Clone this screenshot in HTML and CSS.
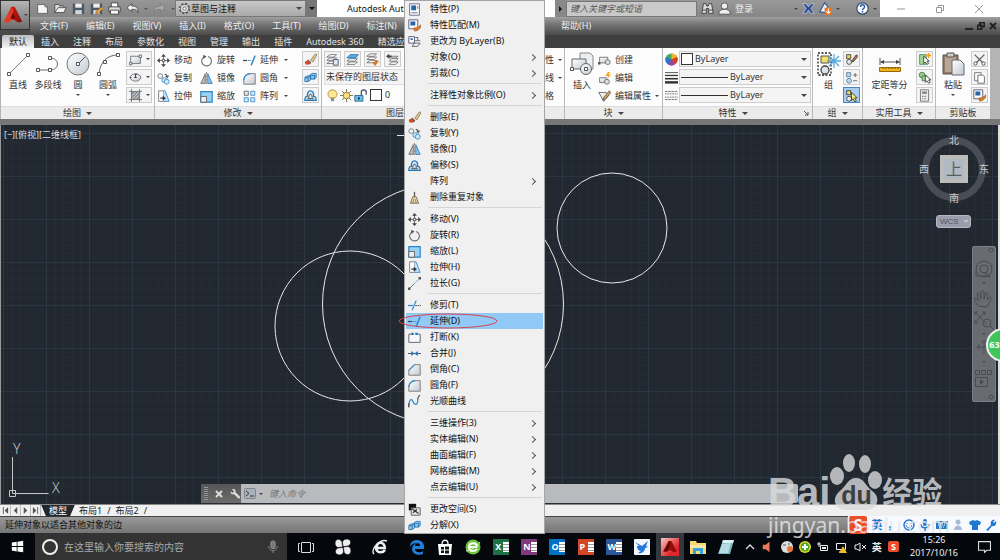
FILE: index.html
```html
<!DOCTYPE html>
<html lang="zh-CN">
<head>
    <meta charset="UTF-8">
    <meta name="viewport" content="width=device-width, initial-scale=1.0">
    <title>Autodesk AutoCAD</title>
    <link rel="stylesheet" href="styles.css">
</head>
<body>
<!-- Icon sprite -->
<svg class="sprite" aria-hidden="true">
    <defs>
        <linearGradient id="shade" x1="0" y1="0" x2="1" y2="1"><stop offset="0" stop-color="#fff"/><stop offset="1" stop-color="#c3cad3"/></linearGradient>
        <linearGradient id="red" x1="0" y1="0" x2="1" y2="0"><stop offset="0" stop-color="#f0553c"/><stop offset=".5" stop-color="#c31a10"/><stop offset="1" stop-color="#7d0b06"/></linearGradient>
    </defs>
    <symbol id="i-acad" viewBox="0 0 24 24"><path d="M10 2h4l9 18-5 1-6-4-6 4-5-1z" fill="url(#red)"/><path d="M12 2v15l-6 4-5-1z" fill="#e23a26"/><path d="M12 9l3 7-3 1-3-1z" fill="#6b0804"/></symbol>
    <symbol id="i-acadtask" viewBox="0 0 24 24"><path d="M10 4h4l7 14-4 1-5-3-5 3-4-1z" fill="#8e0f0c"/><path d="M12 4v6l-3 6-6 2z" fill="#5c0705"/></symbol>
    <symbol id="i-new" viewBox="0 0 16 16"><path d="M2 3h9l3 3v8H2z" fill="#f4f4f4" stroke="#555"/><path d="M11 3v3h3" fill="none" stroke="#555"/></symbol>
    <symbol id="i-open" viewBox="0 0 16 16"><path d="M1 13V3h5l1 2h5v2" fill="#ddd" stroke="#444"/><path d="M1 13l4-6h10l-3 6z" fill="#f2f2f2" stroke="#444"/></symbol>
    <symbol id="i-save" viewBox="0 0 16 16"><path d="M1 2h14v13H1z" fill="#4b5966"/><path d="M4 2h8v5H4z" fill="#eee"/><path d="M4 10h8v5H4z" fill="#cfd6dc"/></symbol>
    <symbol id="i-saveas" viewBox="0 0 16 16"><use href="#i-save"/><path d="M7 15l1-4 6-5 2 2-6 6z" fill="#e9a23b" stroke="#704a10" stroke-width=".6"/></symbol>
    <symbol id="i-print" viewBox="0 0 16 16"><path d="M4 1h8v6H4z" fill="#fff" stroke="#333"/><path d="M1 6h14v6H1z" fill="#ddd" stroke="#333"/><path d="M3 10h10v5H3z" fill="#f6f6f6" stroke="#333"/></symbol>
    <symbol id="i-undo" viewBox="0 0 16 16"><path d="M1 7l6-5v3c5 0 8 2 8 8-2-4-4-4-8-4v3z" fill="#eee" stroke="#444"/></symbol>
    <symbol id="i-redo" viewBox="0 0 16 16"><path d="M15 7L9 2v3c-5 0-8 2-8 8 2-4 4-4 8-4v3z" fill="#aaa" stroke="#777"/></symbol>
    <symbol id="i-gear" viewBox="0 0 16 16"><circle cx="8" cy="8" r="6" fill="#ddd" stroke="#555" stroke-width="2" stroke-dasharray="2.7 2"/><circle cx="8" cy="8" r="5" fill="#ddd" stroke="#555"/><circle cx="8" cy="8" r="2" fill="#fff" stroke="#555"/></symbol>
    <symbol id="i-binoc" viewBox="0 0 16 16"><path d="M3 2h3l1 3h2l1-3h3l2 12H9.500V8h-3v6H1z" fill="#ddd" stroke="#333"/><path d="M2 10h4M10 10h4" stroke="#333"/></symbol>
    <symbol id="i-user" viewBox="0 0 16 16"><circle cx="8" cy="5" r="4" fill="#eee" stroke="#444"/><path d="M1 15c0-5 3-5 5-6h4c2 1 5 1 5 6z" fill="#eee" stroke="#444"/></symbol>
    <symbol id="i-exch" viewBox="0 0 16 16"><path d="M1 2h4l3 4 3-4h4l-4 6 4 6h-4l-3-4-3 4H1l4-6z" fill="#2f4f9e" stroke="#e6e6ee" stroke-width=".7"/></symbol>
    <symbol id="i-a360" viewBox="0 0 16 16"><path d="M1 12l6-11 4 5-3 7z" fill="#eee" stroke="#2d539b" stroke-width="1.300"/><path d="M7 7h9v9H7z" fill="#e9741c"/><path d="M11.500 8v6M9 11.500l2.500 2.500 2.500-2.500" fill="none" stroke="#fff" stroke-width="1.300"/></symbol>
    <symbol id="i-help" viewBox="0 0 16 16"><circle cx="8" cy="8" r="7" fill="#fff" stroke="#3b4b6a" stroke-width="1.500"/><path d="M5.500 6c0-3.500 5-3.500 5 0 0 2-2.500 2-2.500 4M8 11v2" fill="none" stroke="#2a57b0" stroke-width="1.800"/></symbol>

    <symbol id="i-line" viewBox="0 0 24 24"><path d="M3 22L22 3" stroke="#777"/><path d="M1.500 20.500h3v3h-3zM20.500 1.500h3v3h-3z" fill="#fff" stroke="#555"/></symbol>
    <symbol id="i-pline" viewBox="0 0 24 24"><path d="M2 18h12c10 0 10-12 0-12" fill="none" stroke="#666"/><path d="M.500 16.500h3v3h-3zM12.500 16.500h3v3h-3zM12.500 4.500h3v3h-3z" fill="#fff" stroke="#555"/></symbol>
    <symbol id="i-circle" viewBox="0 0 24 24"><circle cx="12" cy="12" r="11" fill="url(#shade)" stroke="#777"/><path d="M12 12l7-7" stroke="#555"/><path d="M10.500 10.500h3v3h-3z" fill="#fff" stroke="#555"/></symbol>
    <symbol id="i-arc" viewBox="0 0 24 24"><path d="M3 22C4 9 12 3 22 3" fill="none" stroke="#666"/><path d="M1.500 20.500h3v3h-3zM7.500 8.500h3v3h-3zM20.500 1.500h3v3h-3z" fill="#fff" stroke="#555"/></symbol>
    <symbol id="i-rect" viewBox="0 0 16 16"><path d="M2 4h12v9H2z" fill="url(#shade)" stroke="#666"/><path d="M.500 11.500h3v3h-3zM12.500 2.500h3v3h-3z" fill="#fff" stroke="#555"/></symbol>
    <symbol id="i-ellipse" viewBox="0 0 16 16"><ellipse cx="8" cy="8" rx="6.500" ry="4.500" fill="url(#shade)" stroke="#666"/><path d="M8 8V4M6.500 8h3M1 8h2M7 4h3" stroke="#444" stroke-width="1.300"/></symbol>
    <symbol id="i-hatch" viewBox="0 0 16 16"><path d="M3 3h10v10H3z" fill="#8d949c"/><path d="M3 0v16M13 0v16M0 3h16M0 13h16" stroke="#666"/><path d="M4 8l4-4M4 12l8-8M8 12l4-4" stroke="#ddd"/></symbol>
    <symbol id="i-move" viewBox="0 0 16 16"><path d="M8 2v12M2 8h12" stroke="#555"/><path d="M8 0l3 3.500H5zM8 16l3-3.500H5zM0 8l3.500-3v6zM16 8l-3.500-3v6z" fill="#444"/><path d="M6.500 6.500h3v3h-3z" fill="#fff" stroke="#444"/></symbol>
    <symbol id="i-copy" viewBox="0 0 16 16"><circle cx="4" cy="5" r="3" fill="#eee" stroke="#777"/><path d="M9 3c2-1 4 0 4 2l2-1-2 4-3-3 2 0" fill="#555"/><circle cx="9" cy="10" r="3" fill="#d5e9f7" stroke="#2f86c9"/><circle cx="12" cy="12" r="3" fill="#d5e9f7" stroke="#2f86c9"/></symbol>
    <symbol id="i-stretch" viewBox="0 0 16 16"><path d="M2 1h6v13H2z" fill="#fff" stroke="#667"/><path d="M8 1h2l5 13H8" fill="#bfe0f5" stroke="#2f86c9"/><path d="M4 10h4" stroke="#333" stroke-width="1.500"/><path d="M7 7l4 3-4 3z" fill="#333"/></symbol>
    <symbol id="i-rotate" viewBox="0 0 16 16"><path d="M10 3a6 6 0 1 1-5 .5" fill="none" stroke="#666" stroke-width="1.300"/><path d="M4 1l4 2-4 3z" fill="#555"/></symbol>
    <symbol id="i-mirror" viewBox="0 0 16 16"><path d="M6.500 2v12H1z" fill="#b9bec5" stroke="#666"/><path d="M9.500 2v12H15z" fill="#8cc5ec" stroke="#2776b5"/><path d="M8 0v16" stroke="#777" stroke-dasharray="3 1"/></symbol>
    <symbol id="i-scale" viewBox="0 0 16 16"><path d="M1 2h14v13H1z" fill="#9ad0f2" stroke="#2b88c7" stroke-width="1.500"/><path d="M1 8h7v7H1z" fill="#eee" stroke="#555"/></symbol>
    <symbol id="i-extend" viewBox="0 0 16 16"><path d="M0 8h5" stroke="#444" stroke-width="1.500"/><path d="M6 8h4" stroke="#2f86c9" stroke-width="1.500" stroke-dasharray="2 1"/><path d="M10 14l5-12" stroke="#2f86c9" stroke-width="1.700"/></symbol>
    <symbol id="i-trim" viewBox="0 0 16 16"><path d="M0 8h6" stroke="#2f86c9" stroke-width="1.500"/><path d="M9 8h7" stroke="#555" stroke-width="1.300" stroke-dasharray="2 1"/><path d="M5 14l5-12" stroke="#2f86c9" stroke-width="1.500"/></symbol>
    <symbol id="i-fillet" viewBox="0 0 16 16"><path d="M1 15V10c0-5 4-8 8-8h6v13z" fill="url(#shade)" stroke="#666"/><path d="M1 10c0-5 4-8 8-8" fill="none" stroke="#2f86c9" stroke-width="1.500"/></symbol>
    <symbol id="i-chamfer" viewBox="0 0 16 16"><path d="M1 15V9l7-7h7v13z" fill="url(#shade)" stroke="#666"/><path d="M1 9l7-7" stroke="#2f86c9" stroke-width="1.500"/></symbol>
    <symbol id="i-array" viewBox="0 0 16 16"><path d="M1.500 1.500h5v5h-5z" fill="#eee" stroke="#555"/><path d="M9.500 1.500h5v5h-5zM1.500 9.500h5v5h-5zM9.500 9.500h5v5h-5z" fill="#d5e9f7" stroke="#2f86c9"/></symbol>
    <symbol id="i-erase" viewBox="0 0 16 16"><path d="M8 9l6-8 2 1-5 9z" fill="#e4c48a" stroke="#654" stroke-width=".7"/><path d="M5 8l4 4-2 2-4-3z" fill="#555"/><ellipse cx="4" cy="12" rx="3" ry="2.500" fill="#d9481f"/></symbol>
    <symbol id="i-explode" viewBox="0 0 16 16"><path d="M1 8l3-2h4v5l-3 2H1zM7 5l3-2h5v5l-2 2H9z" fill="#8cc5ec" stroke="#1d6fae"/><path d="M1 8h4v5M5 8l3-2M9 5.500h4V10" fill="none" stroke="#1d6fae"/></symbol>
    <symbol id="i-offset" viewBox="0 0 16 16"><path d="M1 14h14c0-4-1-5-3-5 0-9-8-9-8 0-2 0-3 2-3 5z" fill="#d5e9f7" stroke="#1d76b8" stroke-width="1.500"/><path d="M4 12h8M6 11c-1-6 5-6 4 0" fill="none" stroke="#444" stroke-width="1.200"/></symbol>
    <symbol id="i-lengthen" viewBox="0 0 16 16"><path d="M2 14l5-5" stroke="#555"/><path d="M7 9l7-7" stroke="#2f86c9" stroke-dasharray="2 1"/><path d="M0 13h3v3H0zM13 0h3v3h-3z" fill="#555"/></symbol>
    <symbol id="i-break" viewBox="0 0 16 16"><path d="M4 4H1v10h14V4h-3" fill="#f5f7fa" stroke="#667" stroke-width="1.200"/><path d="M4 2h3v3H4zM9 2h3v3H9z" fill="#1b76c2"/></symbol>
    <symbol id="i-join" viewBox="0 0 16 16"><path d="M0 8h16" stroke="#555" stroke-width="1.300"/><path d="M4 5l4 3-4 3zM12 5L8 8l4 3z" fill="#1b76c2"/></symbol>
    <symbol id="i-blend" viewBox="0 0 16 16"><path d="M1 15c0-9 3-12 5-7s6 5 6-2" fill="none" stroke="#2f86c9" stroke-width="1.500"/><path d="M1 15v-5M12 6c0-3 1-5 3-6" fill="none" stroke="#555" stroke-width="1.500"/></symbol>
    <symbol id="i-overkill" viewBox="0 0 16 16"><path d="M8 1v6" stroke="#555" stroke-width="1.500"/><path d="M6 7h4l3 8H3z" fill="#ead9a8" stroke="#655a3c"/><path d="M7 10l-1 5M9 10l1 5" stroke="#655a3c" stroke-width=".7"/></symbol>
    <symbol id="i-props" viewBox="0 0 16 16"><path d="M2 1h12v14H2z" fill="#fff" stroke="#557"/><path d="M4 3h6v6H4z" fill="#2a64a8"/><path d="M4 12h8M12 4v3" stroke="#557"/></symbol>
    <symbol id="i-match" viewBox="0 0 16 16"><path d="M1 1h11v11H1z" fill="#fff" stroke="#446"/><path d="M3 3h6v5H3z" fill="#2a64a8"/><path d="M7 11l5-1 4-3v3l-4 4-4 1z" fill="#d67b28" stroke="#8b4511" stroke-width=".5"/></symbol>
    <symbol id="i-bylayer" viewBox="0 0 16 16"><path d="M1 2h7v8H1z" fill="#fff" stroke="#446"/><path d="M3 4h3v2H3z" fill="#2a64a8"/><path d="M9 3h3v3" fill="none" stroke="#444"/><path d="M5 14l3-4h7l-3 4zM7 9l2-2h6" fill="#eee" stroke="#555"/></symbol>
    <symbol id="i-space" viewBox="0 0 16 16"><path d="M1 1h9v8H1z" fill="#111"/><path d="M4 6h11v9H4z" fill="#e8e8e8" stroke="#444"/><path d="M5 7l8 6M6 12l5-4" stroke="#333" stroke-width="1.500"/></symbol>
    <symbol id="i-layer" viewBox="0 0 16 16"><path d="M1 13l4-3h8l-3 3zM1 9l4-3h8l-3 3zM1 5l4-3h8l-3 3z" fill="#fff" stroke="#666"/><path d="M9 8h6v7H9z" fill="#dbe9f4" stroke="#446"/></symbol>
    <symbol id="i-layerb" viewBox="0 0 16 16"><path d="M1 14l4-3h9l-3 3zM1 10l4-3h9l-3 3z" fill="#fff" stroke="#666"/><path d="M1 6l4-4h10l-3 4z" fill="#5bade2" stroke="#1d6fae"/></symbol>
    <symbol id="i-layerm" viewBox="0 0 16 16"><path d="M1 12l4-3h8l-3 3zM1 8l4-3h8l-3 3zM1 4l4-3h8l-3 3z" fill="#fff" stroke="#666"/><path d="M8 12l5-3 3 1-5 6z" fill="#d67b28"/></symbol>
    <symbol id="i-layerp" viewBox="0 0 16 16"><path d="M4 14l3-3h8l-3 3zM4 10l3-3h8l-3 3zM4 6l3-2h8l-3 2z" fill="#fff" stroke="#666"/><path d="M0 4l4-3v2h3v2H4v2z" fill="#444"/></symbol>
    <symbol id="i-bulb" viewBox="0 0 16 16"><path d="M5 11c-5-4-2-10 3-10s8 6 3 10z" fill="#ffe793" stroke="#a8852a"/><path d="M6 11h4v4H6z" fill="#8b8f96"/></symbol>
    <symbol id="i-sun" viewBox="0 0 16 16"><path d="M8 0v16M0 8h16M2.500 2.500l11 11M13.500 2.500l-11 11" stroke="#665e3b"/><circle cx="8" cy="8" r="4" fill="#ffe27a" stroke="#806b2a"/></symbol>
    <symbol id="i-lock" viewBox="0 0 16 16"><path d="M9 8V4c0-4 6-4 6 0v3" fill="none" stroke="#446" stroke-width="1.500"/><path d="M1 8h10v7H1z" fill="#6fc0e8" stroke="#205f86"/><path d="M6 10v3" stroke="#123" stroke-width="2"/></symbol>
    <symbol id="i-insert" viewBox="0 0 24 24"><path d="M10 1h10l3 3v13H10z" fill="#eceef1" stroke="#888"/><path d="M2 7h14v10H2z" fill="url(#shade)" stroke="#666"/><circle cx="16" cy="17" r="5.500" fill="url(#shade)" stroke="#666"/><path d="M.500 15.500h3v3h-3zM14.500 15.500h3v3h-3z" fill="#fff" stroke="#555"/></symbol>
    <symbol id="i-create" viewBox="0 0 16 16"><path d="M2 4h10v7H2z" fill="url(#shade)" stroke="#666"/><circle cx="12" cy="10" r="3" fill="#ddd" stroke="#666"/><path d="M0 10h3v3H0z" fill="#555"/></symbol>
    <symbol id="i-edit" viewBox="0 0 16 16"><path d="M2 7h8v6H2z" fill="url(#shade)" stroke="#666"/><circle cx="11" cy="12" r="3" fill="#ddd" stroke="#666"/><path d="M12 0l-3 5h3l-1 4 5-6h-3l2-3z" fill="#f6a821"/></symbol>
    <symbol id="i-attr" viewBox="0 0 16 16"><path d="M1 3h9l3 4-6 7z" fill="#eee" stroke="#555"/><path d="M6 12l1-3 7-8 2 2-7 8z" fill="#d9a05b" stroke="#555"/></symbol>
    <symbol id="i-wheel" viewBox="0 0 16 16"><circle cx="8" cy="8" r="7.500" fill="#4a5"/><path d="M8 8V.500A7.500 7.500 0 0 1 15 5z" fill="#f5b32b"/><path d="M8 8l7-3a7.500 7.500 0 0 1-3 9z" fill="#d8402b"/><path d="M8 8l4 6a7.500 7.500 0 0 1-8 0z" fill="#a23bb0"/><path d="M8 8l-4 6a7.500 7.500 0 0 1-3-9z" fill="#2f74d0"/></symbol>
    <symbol id="i-weight" viewBox="0 0 16 16"><path d="M0 2h16" stroke="#333"/><path d="M0 5.500h16" stroke="#333" stroke-width="1.500"/><path d="M0 9.500h16" stroke="#333" stroke-width="2"/><path d="M0 14h16" stroke="#333" stroke-width="3"/></symbol>
    <symbol id="i-ltype" viewBox="0 0 16 16"><path d="M0 3h16M0 13h16" stroke="#555" stroke-dasharray="3 1"/><path d="M0 6h16M0 10h16" stroke="#555" stroke-dasharray="2 1"/></symbol>
    <symbol id="i-group" viewBox="0 0 24 24"><path d="M1 1h13v22H1z" fill="none" stroke="#222" stroke-width="1.300" stroke-dasharray="2 1.500"/><path d="M4 4h8v7H4z" fill="#f3e06a" stroke="#555"/><circle cx="8" cy="18" r="4" fill="#dde6ee" stroke="#444" stroke-width="1.300"/><path d="M17 2v14M10 9h14M12 4l10 10M22 4L12 14" stroke="#56a9dd" stroke-width="1.300"/></symbol>
    <symbol id="i-ungroup" viewBox="0 0 16 16"><path d="M2 2h5v5H2z" fill="#e9d95e" stroke="#333"/><circle cx="5" cy="11" r="3" fill="#eee" stroke="#333"/><path d="M8 10l6-8 2 2-6 7z" fill="#b27742" stroke="#433"/></symbol>
    <symbol id="i-gedit" viewBox="0 0 16 16"><path d="M2 2h5v5H2z" fill="#b9d9ee" stroke="#579"/><circle cx="5" cy="12" r="3" fill="#b9d9ee" stroke="#579"/><path d="M10 5h5M12.500 2.500v5M10 12h5" stroke="#555"/></symbol>
    <symbol id="i-gsel" viewBox="0 0 16 16"><path d="M2 2h5v5H2z" fill="#e9d95e" stroke="#333"/><circle cx="5" cy="12" r="3" fill="#eee" stroke="#333"/><path d="M8 4v10l2-2 2 4 2-1-2-4h3z" fill="#f5e66c" stroke="#333"/></symbol>
    <symbol id="i-measure" viewBox="0 0 24 24"><path d="M2 6v7M22 6v7M3 10h18" stroke="#555"/><path d="M2 10l4-2v4zM22 10l-4-2v4z" fill="#444"/><path d="M1.500 15.500h21v4h-21z" fill="#f2b41d" stroke="#94690a"/><path d="M5 16v1M8 16v1M11 16v1M14 16v1M17 16v1M20 16v1" stroke="#664a05"/></symbol>
    <symbol id="i-qsel" viewBox="0 0 16 16"><path d="M2 2h8v12H2z" fill="#a4d58f" stroke="#486"/><path d="M7 4v9l2-2 2 3 2-1-2-3h3z" fill="#fff" stroke="#333"/><path d="M13 0v6M10 3h6" stroke="#f0a21b" stroke-width="2"/></symbol>
    <symbol id="i-selall" viewBox="0 0 16 16"><circle cx="5" cy="5" r="3.500" fill="#9ccf8c" stroke="#474"/><path d="M5 6h6v6H5z" fill="#9ccf8c" stroke="#474"/><path d="M9 5v9l2-2 2 3 2-1-2-3h3z" fill="#fff" stroke="#333"/></symbol>
    <symbol id="i-calc" viewBox="0 0 16 16"><path d="M3 1h10v14H3z" fill="#eee" stroke="#666"/><path d="M5 3h6v3H5z" fill="#7c8791"/><path d="M5 9h6M5 12h6" stroke="#666" stroke-dasharray="1 1" stroke-width="1.500"/></symbol>
    <symbol id="i-paste" viewBox="0 0 24 24"><path d="M2 3h15v19H2z" fill="#937a68" stroke="#554"/><path d="M4 5h11v15H4z" fill="#b9a795"/><path d="M6 1h7v4H6z" fill="#ccc" stroke="#555"/><path d="M11 8h8l4 4v11H11z" fill="url(#shade)" stroke="#667"/></symbol>
    <symbol id="i-cut" viewBox="0 0 16 16"><path d="M2 2l10 10M14 2L4 12" stroke="#666" stroke-width="1.700"/><circle cx="3" cy="13" r="2" fill="#fff" stroke="#333"/><circle cx="13" cy="13" r="2" fill="#fff" stroke="#333"/></symbol>
    <symbol id="i-copyclip" viewBox="0 0 16 16"><path d="M2 2h8v10H2z" fill="#fff" stroke="#666"/><path d="M6 5h6l2 2v8H6z" fill="#fff" stroke="#555"/></symbol>

    <symbol id="i-edge" viewBox="0 0 16 16"><path d="M1 8C1 3 4 1 8 1c5 0 8 4 7 9H6c0 4 6 4 8 2v3c-5 2-11 0-11-5 0-3 2-5 5-6-4 0-6 2-7 4zM6 7h5c0-4-5-3-5 0z" fill="#1f7fd6"/></symbol>
    <symbol id="i-store" viewBox="0 0 16 16"><path d="M1 5h14l-1 11H2z" fill="#fff"/><path d="M5 5c0-5 6-5 6 0" fill="none" stroke="#fff" stroke-width="1.300"/><path d="M4 8h3v2.500H4zM8 7.500h4v3H8zM4 11.500h3V14H4zM8 11.500h4v3H8z" fill="#111"/></symbol>
    <symbol id="i-360" viewBox="0 0 16 16"><circle cx="8" cy="8" r="7.500" fill="#6bc739"/><path d="M12 8H4c0-5 8-5 8 0M4 8c0 5 6 5 8 2" fill="none" stroke="#fff" stroke-width="2"/><path d="M1 12C5 12 12 8 15 3" fill="none" stroke="#def5c4"/></symbol>
    <symbol id="i-bird" viewBox="0 0 16 16"><rect width="16" height="16" rx="1" fill="#f3f8ff"/><path d="M1 3l7 4 6-5-2 5 2 1-3 1c0 4-4 6-7 5l3-2C4 12 3 9 3 7l2 0z" fill="#2576de"/></symbol>
    <symbol id="i-folder" viewBox="0 0 16 16"><path d="M0 2h6l1 2h9v11H0z" fill="#f8d775"/><path d="M0 6h16v3H0z" fill="#fce9a8"/><path d="M3 9h10v6h-3v-3H6v3H3z" fill="#36a3dd"/></symbol>
    <symbol id="i-note" viewBox="0 0 16 16"><path d="M5 1h11l-4 14H0z" fill="#7fb9c4"/><path d="M5 1h11l-1 3H4z" fill="#dfeef0"/><path d="M4 5l9-1-3 10H1z" fill="#b7dbe0"/></symbol>
    <symbol id="i-pinwheel" viewBox="0 0 16 16"><path d="M8 8C3 10 0 8 0 4c0-5 8-6 8 4zM8 8C6 3 8 0 12 0c5 0 6 8-4 8zM8 8c5-2 8 0 8 4 0 5-8 6-8-4zM8 8c2 5 0 8-4 8-5 0-6-8 4-8z" fill="#eee" stroke="#05070b" stroke-width=".7"/></symbol>
    <symbol id="i-ie" viewBox="0 0 16 16"><path d="M14 9H5c-1-7 7-7 8 0M4 8c0 7 7 6 9 3" fill="none" stroke="#eee" stroke-width="2.500"/><path d="M2 15C-2 11 8-1 15 2" fill="none" stroke="#eee" stroke-width="1.500"/></symbol>
    <symbol id="i-taskview" viewBox="0 0 16 16"><path d="M3.500 3.500h9v10h-9zM2 4.500H.500v8H2M14 4.500h1.500v8H14" fill="none" stroke="#ddd"/></symbol>
    <symbol id="i-win" viewBox="0 0 16 16"><path d="M1 3l6-1v5.500H1zM8 2l7-1v6.500H8zM1 8.500h6V14l-6-1zM8 8.500h7V15l-7-1z" fill="#fff"/></symbol>
    <symbol id="i-mic" viewBox="0 0 16 16"><rect x="5.500" y="1" width="5" height="9" rx="2.500" fill="#777" stroke="#999"/><path d="M3 7c0 7 10 7 10 0M8 12v3" fill="none" stroke="#888"/></symbol>
    <symbol id="i-wrench" viewBox="0 0 16 16"><path d="M15 13l-7-7c1-3-2-6-5-4l3 3-2 2-3-2c-1 3 2 5 5 4l7 7z" fill="currentColor"/></symbol>
    <symbol id="i-speaker" viewBox="0 0 16 16"><path d="M1 5h4l5-4v14l-5-4H1z" fill="currentColor"/></symbol>
</svg>

<div class="desktop">
    <!-- Title bar and menus -->
    <header class="app-header">
        <button class="app-button" aria-label="应用程序"><svg class="app-logo"><use href="#i-acad"/></svg><i class="caret"></i></button>
        <div class="title-row">
            <div class="quick-access">
                <button aria-label="新建"><svg class="ico"><use href="#i-new"/></svg></button>
                <button aria-label="打开"><svg class="ico"><use href="#i-open"/></svg></button>
                <button aria-label="保存"><svg class="ico"><use href="#i-save"/></svg></button>
                <button aria-label="另存为"><svg class="ico"><use href="#i-saveas"/></svg></button>
                <button aria-label="打印"><svg class="ico"><use href="#i-print"/></svg></button>
                <button aria-label="放弃"><svg class="ico"><use href="#i-undo"/></svg></button>
                <i class="caret"></i>
                <button aria-label="重做"><svg class="ico"><use href="#i-redo"/></svg></button>
                <i class="caret"></i>
            </div>
            <div class="workspace">
                <svg class="ico"><use href="#i-gear"/></svg>
                <select aria-label="工作空间"><option>草图与注释</option></select>
                <i class="caret large"></i>
            </div>
            <button class="qat-more" aria-label="自定义"><i class="caret large"></i></button>
            <div class="window-title">Autodesk AutoCAD 2014</div>
            <div class="info-center">
                <button class="info-toggle" aria-label="展开"></button>
                <input type="text" placeholder="键入关键字或短语" aria-label="搜索帮助">
                <svg class="ico"><use href="#i-binoc"/></svg>
                <svg class="ico"><use href="#i-user"/></svg>
                <button class="login">登录</button>
                <i class="caret"></i>
                <svg class="ico"><use href="#i-exch"/></svg>
                <svg class="ico"><use href="#i-a360"/></svg>
                <i class="caret"></i>
                <svg class="ico help"><use href="#i-help"/></svg>
                <i class="caret"></i>
            </div>
            <div class="window-controls">
                <button aria-label="最小化"><svg viewBox="0 0 8 8"><path d="M0 4h8"/></svg></button>
                <button aria-label="还原"><svg viewBox="0 0 8 8"><path d="M.500 2.500h5v5h-5zM2.500 2V.500h5v5H6"/></svg></button>
                <button aria-label="关闭"><svg viewBox="0 0 8 8"><path d="M0 0l8 8M8 0L0 8"/></svg></button>
            </div>
        </div>
        <nav class="menu-bar">
            <a href="#">文件(F)</a><a href="#">编辑(E)</a><a href="#">视图(V)</a><a href="#">插入(I)</a><a href="#">格式(O)</a><a href="#">工具(T)</a><a href="#">绘图(D)</a><a href="#">标注(N)</a><a href="#">修改(M)</a><a href="#">参数(P)</a><a href="#">窗口(W)</a><a href="#">帮助(H)</a>
            <div class="doc-controls">
                <button aria-label="最小化"><svg viewBox="0 0 8 8"><path d="M0 7h8"/></svg></button>
                <button aria-label="还原"><svg viewBox="0 0 8 8"><path d="M.500 3.500h4v4h-4zM3 3V.500h4.500v4H5"/></svg></button>
                <button aria-label="关闭"><svg viewBox="0 0 8 8"><path d="M1 1l6 6M7 1L1 7"/></svg></button>
            </div>
        </nav>
    </header>

    <nav class="ribbon-tabs">
        <a href="#" class="active">默认</a><a href="#">插入</a><a href="#">注释</a><a href="#">布局</a><a href="#">参数化</a><a href="#">视图</a><a href="#">管理</a><a href="#">输出</a><a href="#">插件</a><a href="#">Autodesk 360</a><a href="#">精选应用</a>
    </nav>

    <!-- Ribbon -->
    <div class="ribbon">
        <section class="panel draw">
            <div class="panel-body">
                <button class="big"><svg><use href="#i-line"/></svg>直线</button>
                <button class="big"><svg><use href="#i-pline"/></svg>多段线</button>
                <button class="big"><svg><use href="#i-circle"/></svg>圆<i class="caret"></i></button>
                <button class="big"><svg><use href="#i-arc"/></svg>圆弧<i class="caret"></i></button>
                <div class="stack wide">
                    <button class="mini" aria-label="矩形"><svg class="ico"><use href="#i-rect"/></svg><i class="caret"></i></button>
                    <button class="mini" aria-label="椭圆"><svg class="ico"><use href="#i-ellipse"/></svg><i class="caret"></i></button>
                    <button class="mini" aria-label="图案填充"><svg class="ico"><use href="#i-hatch"/></svg><i class="caret"></i></button>
                </div>
            </div>
            <footer>绘图<i class="caret large"></i></footer>
        </section>
        <section class="panel modify">
            <div class="panel-body">
                <div class="tool-grid">
                    <button><svg class="ico"><use href="#i-move"/></svg>移动</button>
                    <button><svg class="ico"><use href="#i-rotate"/></svg>旋转</button>
                    <button><svg class="ico"><use href="#i-extend"/></svg>延伸<i class="caret"></i></button>
                    <button><svg class="ico"><use href="#i-copy"/></svg>复制</button>
                    <button><svg class="ico"><use href="#i-mirror"/></svg>镜像</button>
                    <button><svg class="ico"><use href="#i-fillet"/></svg>圆角<i class="caret"></i></button>
                    <button><svg class="ico"><use href="#i-stretch"/></svg>拉伸</button>
                    <button><svg class="ico"><use href="#i-scale"/></svg>缩放</button>
                    <button><svg class="ico"><use href="#i-array"/></svg>阵列<i class="caret"></i></button>
                </div>
                <div class="stack">
                    <button class="mini" aria-label="删除"><svg class="ico"><use href="#i-erase"/></svg></button>
                    <button class="mini" aria-label="分解"><svg class="ico"><use href="#i-explode"/></svg></button>
                    <button class="mini" aria-label="偏移"><svg class="ico"><use href="#i-offset"/></svg></button>
                </div>
            </div>
            <footer>修改<i class="caret large"></i></footer>
        </section>
        <section class="panel layers">
            <div class="panel-body">
                <div class="layer-row">
                    <button class="mini" aria-label="图层特性"><svg class="ico"><use href="#i-layer"/></svg></button>
                    <button class="mini" aria-label="置为当前"><svg class="ico"><use href="#i-layerb"/></svg></button>
                    <button class="mini" aria-label="图层匹配"><svg class="ico"><use href="#i-layerm"/></svg></button>
                    <button class="mini" aria-label="上一个图层"><svg class="ico"><use href="#i-layerp"/></svg></button>
                </div>
                <select class="layer-state" aria-label="图层状态"><option>未保存的图层状态</option></select>
                <div class="layer-current">
                    <svg class="ico"><use href="#i-bulb"/></svg><svg class="ico"><use href="#i-sun"/></svg><svg class="ico"><use href="#i-lock"/></svg><i class="swatch"></i>0
                </div>
            </div>
            <footer>图层<i class="caret large"></i></footer>
        </section>
        <section class="panel annotate">
            <div class="panel-body">
                <div class="tool-list">
                    <button>线性<i class="caret"></i></button>
                    <button>引线<i class="caret"></i></button>
                    <button>表格</button>
                </div>
            </div>
            <footer>注释<i class="caret large"></i></footer>
        </section>
        <section class="panel block">
            <div class="panel-body">
                <button class="big"><svg><use href="#i-insert"/></svg>插入</button>
                <div class="tool-list">
                    <button><svg class="ico"><use href="#i-create"/></svg>创建</button>
                    <button><svg class="ico"><use href="#i-edit"/></svg>编辑</button>
                    <button><svg class="ico"><use href="#i-attr"/></svg>编辑属性<i class="caret"></i></button>
                </div>
            </div>
            <footer>块<i class="caret large"></i></footer>
        </section>
        <section class="panel properties">
            <div class="panel-body">
                <div class="prop"><svg class="ico"><use href="#i-wheel"/></svg><label><i class="swatch"></i><select aria-label="对象颜色"><option>ByLayer</option></select><i class="caret large"></i></label></div>
                <div class="prop"><svg class="ico"><use href="#i-weight"/></svg><label><i class="rule"></i><select aria-label="线宽"><option>ByLayer</option></select><i class="caret large"></i></label></div>
                <div class="prop"><svg class="ico"><use href="#i-ltype"/></svg><label><i class="rule"></i><select aria-label="线型"><option>ByLayer</option></select><i class="caret large"></i></label></div>
            </div>
            <footer>特性<i class="caret large"></i><svg class="launcher" viewBox="0 0 6 6"><path d="M1 1l4 4M5 2v3H2" fill="none" stroke="#555"/></svg></footer>
        </section>
        <section class="panel group">
            <div class="panel-body">
                <button class="big"><svg><use href="#i-group"/></svg>组</button>
                <div class="stack">
                    <button class="mini" aria-label="解除编组"><svg class="ico"><use href="#i-ungroup"/></svg></button>
                    <button class="mini" aria-label="组编辑"><svg class="ico"><use href="#i-gedit"/></svg></button>
                    <button class="mini on" aria-label="组选择"><svg class="ico"><use href="#i-gsel"/></svg></button>
                </div>
            </div>
            <footer>组<i class="caret large"></i></footer>
        </section>
        <section class="panel utils">
            <div class="panel-body">
                <button class="big"><svg><use href="#i-measure"/></svg>定距等分<i class="caret"></i></button>
                <div class="stack">
                    <button class="mini" aria-label="快速选择"><svg class="ico"><use href="#i-qsel"/></svg></button>
                    <button class="mini" aria-label="全部选择"><svg class="ico"><use href="#i-selall"/></svg></button>
                    <button class="mini" aria-label="计算器"><svg class="ico"><use href="#i-calc"/></svg></button>
                </div>
            </div>
            <footer>实用工具<i class="caret large"></i></footer>
        </section>
        <section class="panel clipboard">
            <div class="panel-body">
                <button class="big"><svg><use href="#i-paste"/></svg>粘贴<i class="caret"></i></button>
                <div class="stack">
                    <button class="mini" aria-label="剪切"><svg class="ico"><use href="#i-cut"/></svg></button>
                    <button class="mini" aria-label="复制"><svg class="ico"><use href="#i-copyclip"/></svg></button>
                    <button class="mini" aria-label="特性匹配"><svg class="ico"><use href="#i-match"/></svg></button>
                </div>
            </div>
            <footer>剪贴板</footer>
        </section>
    </div>

    <!-- Drawing area -->
    <main class="canvas">
        <svg class="drawing">
            <defs>
                <pattern id="grid" x="2" y="8" width="43" height="43" patternUnits="userSpaceOnUse">
                    <path d="M9.500 0v43M17.500 0v43M26.500 0v43M34.500 0v43M0 9.500h43M0 17.500h43M0 26.500h43M0 34.500h43" stroke="#252c36"/>
                    <path d="M.500 0v43M0 .500h43" stroke="#2d3543"/>
                </pattern>
            </defs>
            <rect width="100%" height="100%" fill="url(#grid)"/>
            <g fill="none" stroke="#e8e8e8">
                <circle cx="611" cy="103" r="55"/>
                <circle cx="349" cy="201" r="75"/>
                <circle cx="442" cy="179" r="120.500"/>
                <path d="M396 10.500h9"/>
            </g>
            <g fill="none" stroke="#c4c6c8">
                <path d="M11.500 332v36.500h36M8.500 365.500h6v6h-6z"/>
            </g>
            <text x="12" y="329" class="axis">Y</text>
            <text x="51" y="368" class="axis">X</text>
        </svg>
        <div class="view-label">[−][俯视][二维线框]</div>

        <div class="compass">
            <span class="north">北</span><span class="west">西</span><span class="east">东</span><span class="south">南</span>
            <button class="cube">上</button>
        </div>
        <button class="wcs">WCS<i class="caret large"></i></button>

        <div class="nav-panel">
            <svg viewBox="0 0 24 156">
                <g fill="none" stroke="#484c52">
                    <circle cx="19" cy="4" r="2"/><circle cx="19" cy="151" r="2"/>
                    <circle cx="12" cy="23" r="8"/><circle cx="12" cy="23" r="4"/><path d="M4 25v5h14M12 27c3 0 4 2 6 5"/>
                    <path d="M6 60c-2-4-5-6-3-8l4 3-2-7c1-2 2-1 3 1l1 4V46c1-2 3-1 3 0v7l2-6c2-1 2 1 2 2l-1 5 3-3c2 0 1 3 0 4l-3 6z"/>
                    <path d="M3 66l12 12M13 66L3 77M3 69v-3h3M10 66h3v3M3 74v3h3"/><circle cx="15" cy="77" r="4"/><path d="M18 80l4 4"/>
                    <path d="M12 94v14M5 101h14M9 97l3-3 3 3M8 98l-3 3 3 3M16 98l3 3-3 3"/>
                    <path d="M3.500 124.500h4v4h-4zM9.500 124.500h4v4h-4zM15.500 124.500h4v4h-4zM3.500 131.500h12v9h-12z"/>
                </g>
                <path d="M10 36h4l-2 2zM10 87h4l-2 2zM10 115h4l-2 2zM8 133l4 3-4 3z" fill="#484c52"/>
            </svg>
        </div>

        <div class="command-line">
            <div class="command-tools">
                <i class="grip"></i>
                <button aria-label="关闭"><svg viewBox="0 0 8 8"><path d="M1 1l6 6M7 1L1 7" stroke="#ddd" stroke-width="2"/></svg></button>
                <button aria-label="自定义"><svg class="wrench"><use href="#i-wrench"/></svg></button>
            </div>
            <svg class="prompt" viewBox="0 0 12 11"><rect x=".500" y=".500" width="11" height="10" rx="1" fill="#a9b0b9" stroke="#7d8792"/><path d="M2 3l3 2.500L2 8M6 8h4" fill="none" stroke="#333"/></svg>
            <i class="caret"></i>
            <input type="text" placeholder="键入命令" aria-label="命令">
        </div>
    </main>

    <div class="layout-tabs">
        <button aria-label="首个"><svg viewBox="0 0 8 8"><path d="M1 0v8h1V0zM7 0v8L3 4z"/></svg></button>
        <button aria-label="上一个"><svg viewBox="0 0 8 8"><path d="M6 0v8L2 4z"/></svg></button>
        <button aria-label="下一个"><svg viewBox="0 0 8 8"><path d="M2 0v8l4-4z"/></svg></button>
        <button aria-label="末个"><svg viewBox="0 0 8 8"><path d="M1 0v8l4-4zM6 0v8h1V0z"/></svg></button>
        <a href="#" class="model">模型</a><a href="#">布局1</a><i>/</i><a href="#">布局2</a><i>/</i>
    </div>
    <div class="status-bar">延伸对象以适合其他对象的边</div>

    <!-- Windows taskbar -->
    <div class="taskbar">
        <button class="start" aria-label="开始"><svg class="task-ico"><use href="#i-win"/></svg></button>
        <div class="search">
            <i class="ring"></i>
            <input type="text" placeholder="在这里输入你要搜索的内容" aria-label="搜索">
            <svg class="task-ico"><use href="#i-mic"/></svg>
        </div>
        <div class="pinned">
            <button aria-label="任务视图"><svg class="task-ico"><use href="#i-taskview"/></svg></button>
            <button aria-label="浏览器"><svg class="task-ico"><use href="#i-pinwheel"/></svg></button>
            <button aria-label="Internet Explorer"><svg class="task-ico"><use href="#i-ie"/></svg></button>
        </div>
        <div class="running">
            <button aria-label="Edge"><svg class="task-ico"><use href="#i-edge"/></svg></button>
            <button aria-label="应用商店"><svg class="task-ico"><use href="#i-store"/></svg></button>
            <button aria-label="360"><svg class="task-ico"><use href="#i-360"/></svg></button>
            <button><span class="office excel">X</span></button>
            <button><span class="office onenote">N</span></button>
            <button><span class="office outlook">O</span></button>
            <button><span class="office ppt">P</span></button>
            <button><span class="office word">W</span></button>
            <button aria-label="迅雷"><svg class="task-ico"><use href="#i-bird"/></svg></button>
            <button class="current" aria-label="AutoCAD"><svg class="task-ico acad"><use href="#i-acadtask"/></svg></button>
            <button aria-label="文件资源管理器"><svg class="task-ico"><use href="#i-folder"/></svg></button>
            <button aria-label="记事本"><svg class="task-ico"><use href="#i-note"/></svg></button>
        </div>
        <div class="tray">
            <svg viewBox="0 0 12 12"><path d="M2 8l4-4 4 4" fill="none" stroke="#ddd" stroke-width="1.300"/></svg>
            <svg viewBox="0 0 16 16" color="#e8795a"><use href="#i-speaker"/></svg>
            <svg viewBox="0 0 12 12"><circle cx="6" cy="6" r="6" fill="#ddd"/><path d="M2 4h3M7 3h2" stroke="#555"/><circle cx="9" cy="8" r="3" fill="#e8733c"/></svg>
            <svg viewBox="0 0 12 12"><circle cx="6" cy="6" r="6" fill="#e9d625"/><circle cx="6" cy="6" r="4.500" fill="#49a82e"/><path d="M6 3v6M3 6h6" stroke="#fff" stroke-width="2"/></svg>
            <svg viewBox="0 0 12 12"><path d="M3.500 4.500h7v5h-7zM0 3h4M2 1v5" fill="none" stroke="#eee"/><path d="M5 6h4v2H5z" fill="#eee"/></svg>
            <svg viewBox="0 0 12 12"><path d="M1.500 2.500h9v6h-9zM4 11h4" fill="none" stroke="#eee"/><path d="M8 5l4 7H4z" fill="#f4bd24"/></svg>
            <svg viewBox="0 0 12 12"><path d="M1 4h2l3-2v8L3 8H1zM8 4l4 4M12 4L8 8" fill="none" stroke="#eee"/></svg>
            <span class="ime">英</span>
            <span class="sogou">S</span>
        </div>
        <time class="clock">15:26<br>2017/10/16</time>
        <button class="notify" aria-label="通知"><svg viewBox="0 0 12 12"><path d="M.500 1.500h11v8H8l-2 2v-2H.500z" fill="none" stroke="#ddd"/></svg></button>
    </div>

    <!-- Input method bar -->
    <div class="ime-bar">
        <span class="sogou">S</span>
        <b>英</b><b>，</b>
        <svg viewBox="0 0 12 12"><circle cx="6" cy="6" r="5" fill="none" stroke="#2678cc" stroke-width="1.500"/><path d="M3 6c1 4 5 4 6 0M4 4v1M8 4v1" fill="none" stroke="#2678cc"/></svg>
        <svg viewBox="0 0 12 12"><rect x="4" y="0" width="4" height="7" rx="2" fill="#2678cc"/><path d="M2 5c0 5 8 5 8 0M6 9v3" fill="none" stroke="#2678cc" stroke-width="1.500"/></svg>
        <svg viewBox="0 0 12 12"><path d="M0 2h12v8H0z" fill="#2678cc"/><path d="M2 4h8M2 6h8M3 8h6" stroke="#fff" stroke-dasharray="1 1"/></svg>
        <svg viewBox="0 0 12 12"><circle cx="6" cy="3" r="2.500" fill="#a9b9d4"/><path d="M2 11c0-6 8-6 8 0z" fill="#a9b9d4"/></svg>
        <svg viewBox="0 0 12 12"><path d="M4 1c1 1 3 1 4 0l4 2-1 3H9v5H3V6H1L0 3z" fill="#1e78cf"/></svg>
        <svg viewBox="0 0 12 12"><path d="M1 11l5-5c-1-3 1-6 4-5L8 3l1 1 2-2c1 3-1 6-4 5l-4 5z" fill="#1e78cf"/></svg>
    </div>

    <!-- Watermark -->
    <div class="watermark">
        <div class="brand">
            <span class="latin">Bai</span>
            <div class="paw">
                <svg viewBox="0 0 52 56"><g fill="#d9dadc"><ellipse cx="19" cy="9" rx="6" ry="9"/><ellipse cx="35" cy="10" rx="6" ry="9"/><ellipse cx="7" cy="22" rx="7" ry="9"/><ellipse cx="45" cy="26" rx="7" ry="9"/><path d="M26 24c8 0 9 7 15 12 6 4 8 9 5 15-3 5-9 6-20 5-11 1-17 0-20-5-3-6 0-11 5-15 6-5 7-12 15-12z"/></g></svg>
                <span>du</span>
            </div>
            <span class="cjk">经验</span>
        </div>
        <div class="site">jingyan.baidu.com</div>
    </div>

    <button class="float-ball">63</button>

    <!-- Modify menu -->
    <div class="modify-menu" role="menu">
        <button><svg class="ico"><use href="#i-props"/></svg>特性(P)</button>
        <button><svg class="ico"><use href="#i-match"/></svg>特性匹配(M)</button>
        <button><svg class="ico"><use href="#i-bylayer"/></svg>更改为 ByLayer(B)</button>
        <button class="sub">对象(O)</button>
        <button class="sub">剪裁(C)</button>
        <hr>
        <button class="sub">注释性对象比例(O)</button>
        <hr>
        <button><svg class="ico"><use href="#i-erase"/></svg>删除(E)</button>
        <button><svg class="ico"><use href="#i-copy"/></svg>复制(Y)</button>
        <button><svg class="ico"><use href="#i-mirror"/></svg>镜像(I)</button>
        <button><svg class="ico"><use href="#i-offset"/></svg>偏移(S)</button>
        <button class="sub">阵列</button>
        <button><svg class="ico"><use href="#i-overkill"/></svg>删除重复对象</button>
        <hr>
        <button><svg class="ico"><use href="#i-move"/></svg>移动(V)</button>
        <button><svg class="ico"><use href="#i-rotate"/></svg>旋转(R)</button>
        <button><svg class="ico"><use href="#i-scale"/></svg>缩放(L)</button>
        <button><svg class="ico"><use href="#i-stretch"/></svg>拉伸(H)</button>
        <button><svg class="ico"><use href="#i-lengthen"/></svg>拉长(G)</button>
        <hr>
        <button><svg class="ico"><use href="#i-trim"/></svg>修剪(T)</button>
        <button class="selected"><svg class="ico"><use href="#i-extend"/></svg>延伸(D)<svg class="mark" viewBox="0 0 100 16"><ellipse cx="50" cy="8" rx="49" ry="7" fill="none" stroke="#d8434e"/></svg></button>
        <button><svg class="ico"><use href="#i-break"/></svg>打断(K)</button>
        <button><svg class="ico"><use href="#i-join"/></svg>合并(J)</button>
        <button><svg class="ico"><use href="#i-chamfer"/></svg>倒角(C)</button>
        <button><svg class="ico"><use href="#i-fillet"/></svg>圆角(F)</button>
        <button><svg class="ico"><use href="#i-blend"/></svg>光顺曲线</button>
        <hr>
        <button class="sub">三维操作(3)</button>
        <button class="sub">实体编辑(N)</button>
        <button class="sub">曲面编辑(F)</button>
        <button class="sub">网格编辑(M)</button>
        <button class="sub">点云编辑(U)</button>
        <hr>
        <button><svg class="ico"><use href="#i-space"/></svg>更改空间(S)</button>
        <button><svg class="ico"><use href="#i-explode"/></svg>分解(X)</button>
    </div>
</div>
</body>
</html>
```

FILE: styles.css
```css
* {margin: 0; padding: 0; box-sizing: border-box;}
body {font-family: "Noto Sans", "Noto Sans CJK SC", sans-serif; font-size: 9px; line-height: 12px; color: #333;}
button, input, select {font: inherit; color: inherit; background: none; border: none; border-radius: 0; appearance: none; white-space: nowrap;}
a {color: inherit; text-decoration: none; white-space: nowrap;}
i {font-style: normal;}
svg {display: block; flex-shrink: 0;}
.sprite {position: absolute; width: 0; height: 0;}
.ico {width: 13px; height: 13px;}
.desktop {position: relative; min-height: 100vh; display: flex; flex-direction: column; overflow: hidden; background: #6b6b6b;}
.caret {width: 0; height: 0; flex-shrink: 0; border: 2px solid transparent; border-top-color: #444; border-bottom: 0;}
.caret.large {border-width: 3px 3px 0 3px;}
.swatch {width: 12px; height: 12px; flex-shrink: 0; background: #fff; border: 1px solid #333;}

/* Header */
.app-header {display: grid; grid-template-columns: 30px minmax(0, 1fr); grid-template-rows: 17px 18px; background: #4a4a4a;}
.app-button {grid-row: 1 / 3; display: flex; align-items: center; justify-content: center; gap: 1px; height: 30px; background: linear-gradient(#b5b5b5, #6d6d6d); border: 1px solid #333;}
.app-logo {width: 20px; height: 22px;}
.title-row {display: flex; background: linear-gradient(#969696, #858585);}
.quick-access {display: flex; align-items: center; gap: 5px; width: 145px; padding-left: 6px;}
.quick-access .caret {border-top-color: #555;}
.workspace {display: flex; align-items: center; width: 131px; padding: 0 3px 0 2px; background: linear-gradient(#c8c8c8, #a9a9a9); border: 1px solid #777; color: #111;}
.workspace select {flex: 1; min-width: 0;}
.qat-more {width: 11px; display: flex; align-items: center; justify-content: center; background: #777;}
.qat-more .caret {border-top-color: #111;}
.window-title {flex: 1; min-width: 0; padding-left: 30px; line-height: 17px; background: #fff; color: #111; white-space: nowrap; overflow: hidden;}
.info-center {display: flex; align-items: center; gap: 4px; width: 325px; padding-right: 3px; color: #eee; background: linear-gradient(#999, #868686);}
.info-toggle {width: 11px; height: 17px; margin-right: -4px; background: #888;}
.info-toggle::before {content: ""; display: block; width: 0; height: 0; margin-left: 4px; border: 3px solid transparent; border-left-color: #111; border-right: 0;}
.info-center input {width: 131px; height: 16px; padding: 0 3px; background: #c9c9c9; border: 1px solid #777; color: #333; font-style: italic;}
.info-center input::placeholder {color: #555; opacity: 1;}
.login {margin-right: auto;}
.help {margin-left: 12px;}
.window-controls {display: flex; width: 120px; padding: 0 2px; justify-content: space-around; background: #fff;}
.window-controls svg, .doc-controls svg {width: 8px; height: 8px; fill: none; stroke: #999;}
.menu-bar {display: flex; align-items: center; gap: 18px; padding: 0 3px 0 10px; background: linear-gradient(#a0a0a0, #757575 40%, #4a4a4a); color: #eee;}
.doc-controls {display: flex; gap: 4px; margin-left: auto;}
.doc-controls svg {stroke: #222; stroke-width: 2;}
.ribbon-tabs {display: flex; height: 13px; padding-left: 2px; background: #3f3f3f; color: #e2e2e2;}
.ribbon-tabs a {padding: 0 7px; line-height: 13px;}
.ribbon-tabs .active {background: linear-gradient(#bdbdbd, #f4f4f4); color: #222; border-radius: 2px 2px 0 0;}

/* Ribbon */
.ribbon {display: flex; height: 77px; padding: 0 10px 0 1px; border-bottom: 6px solid #777; background: #b4b4b4;}
.panel {display: flex; flex-direction: column; flex-shrink: 0; border-right: 1px solid #b9b9b9; background: #fcfcfc; overflow: hidden;}
.panel-body {display: flex; flex: 1; padding: 3px 2px 0 2px;}
.panel footer {height: 13px; display: flex; align-items: center; justify-content: center; gap: 5px; background: #ebebeb; border-top: 1px solid #ddd;}
.draw {width: 154px;}
.modify {width: 167px;}
.layers {width: 158px;}
.annotate {width: 85px;}
.block {width: 98px;}
.properties {flex: 1; min-width: 0;}
.group {width: 50px;}
.utils {width: 73px;}
.clipboard {width: 54px; border-right: none;}
.big {display: flex; flex-direction: column; align-items: center; width: 30px; flex-shrink: 0; height: 46px;}
.big svg {width: 24px; height: 24px; margin: 1px 0 3px 0;}
.big .caret {margin-top: 3px;}
.utils .big {width: 49px;}
.group .big {width: 27px;}
.stack {display: flex; flex-direction: column; gap: 2px; margin-left: auto;}
.mini {display: flex; align-items: center; justify-content: center; width: 17px; height: 16px; background: #f4f4f4; border: 1px solid #ccc;}
.wide .mini {width: 26px; gap: 4px;}
.mini.on {background: #a9cdf1; border-color: #4a86c4;}
.tool-grid {display: grid; grid-template-columns: 43px 43px 50px; grid-auto-rows: 18px;}
.tool-grid button, .tool-list button {display: flex; align-items: center; gap: 4px; height: 18px;}
.tool-grid .caret {margin-left: 2px;}
.layers .panel-body {flex-direction: column; gap: 2px; padding-right: 0;}
.layer-row {display: flex; gap: 3px;}
.layer-state {height: 16px; padding-left: 1px; background: #f4f4f4; border: 1px solid #ddd; text-align: left;}
.layer-current {display: flex; align-items: center; gap: 1px; height: 16px; padding-left: 2px;}
.layer-current .swatch {margin: 0 2px;}
.annotate .tool-list {margin-left: auto;}
.block .tool-list {margin-left: 1px;}
.properties .panel-body {flex-direction: column; gap: 2px; padding-right: 1px;}
.prop {display: flex; align-items: center; gap: 1px;}
.prop label {display: flex; align-items: center; flex: 1; min-width: 0; gap: 2px; height: 16px; padding: 0 3px 0 1px; background: #f4f4f4; border: 1px solid #ccc;}
.prop select {flex: 1; min-width: 0;}
.rule {width: 47px; height: 1px; background: #333;}
.launcher {width: 6px; height: 6px; margin-right: 3px;}
.properties footer::before {content: ""; margin-right: auto;}
.properties .launcher {margin-left: auto;}

/* Drawing area */
.canvas {position: relative; flex: 1; min-height: 379px; background: #212830; border-left: 1px solid #999; border-right: 2px solid #ddd;}
.drawing {position: absolute; width: 100%; height: 100%;}
.axis {font-size: 14px; font-weight: 300; fill: #c4c6c8;}
.view-label {position: absolute; top: 4px; left: 3px; color: #ddd;}
.compass {position: absolute; top: 12px; right: 12px; width: 64px; height: 64px; border: 7px solid #484d56; border-radius: 50%; color: #c9cbce; line-height: 10px;}
.compass span {position: absolute; font-size: 10px;}
.north {top: -9px; left: 20px;}
.south {bottom: -9px; left: 20px;}
.west {top: 20px; left: -10px;}
.east {top: 20px; right: -10px;}
.cube {position: absolute; top: 11px; left: 11px; width: 28px; height: 28px; border: 4px solid #bcbcba; background: #b0b9c1; font-size: 16px; line-height: 18px; color: #5a5e62;}
.wcs {position: absolute; top: 90px; right: 27px; display: flex; align-items: center; gap: 4px; width: 35px; height: 13px; padding-left: 3px; border: 1px solid #b5b7c4; border-radius: 3px; background: #9a9dac; color: #53565f; font-family: "Liberation Sans", sans-serif; font-size: 8px;}
.wcs .caret {border-top-color: #c0c2ce;}
.nav-panel {position: absolute; top: 121px; right: 2px; width: 24px; border-radius: 3px; background: #686b6f; box-shadow: inset 0 0 0 1px #7b7e82;}
.command-line {position: absolute; left: 200px; right: 200px; bottom: 1px; height: 19px; display: flex; align-items: center; gap: 3px; background: #b9babd; border-radius: 2px;}
.command-tools {display: flex; align-items: center; gap: 7px; width: 40px; height: 19px; padding-left: 3px; background: linear-gradient(#555, #6c6c6c); color: #ddd;}
.command-tools svg {width: 8px; height: 8px;}
.command-tools .wrench {width: 11px; height: 11px;}
.grip {width: 4px; height: 13px; background: repeating-linear-gradient(#999 0 1px, #555 1px 2px);}
.prompt {width: 12px; height: 11px;}
.command-line input {flex: 1; min-width: 0; padding-left: 3px; font-style: italic;}
.command-line input::placeholder {color: #777; opacity: 1;}

/* Layout tabs and status */
.layout-tabs {display: flex; align-items: center; height: 13px; padding-left: 1px; background: #f0f0f0; border-bottom: 1px solid #444; border-top: 1px solid #888; color: #222;}
.layout-tabs button {width: 10px; height: 11px; padding: 2px 1px; border-right: 1px solid #bbb; fill: #555;}
.layout-tabs svg {width: 7px; height: 7px;}
.layout-tabs a {padding: 0 4px;}
.layout-tabs .model {background: #212830; color: #fff; padding: 0 8px; clip-path: polygon(0 0, 100% 0, 85% 100%, 15% 100%);}
.layout-tabs i {padding: 0 1px;}
.status-bar {height: 16px; padding-left: 5px; line-height: 16px; background: linear-gradient(#999, #757575); color: #111;}

/* Taskbar */
.taskbar {display: flex; height: 27px; background: #04070c; color: #eee;}
.taskbar button {display: flex; align-items: center; justify-content: center;}
.task-ico {width: 16px; height: 16px;}
.start {width: 35px;}
.start .task-ico {width: 13px; height: 13px;}
.search {display: flex; align-items: center; width: 252px; padding: 0 7px; gap: 6px; background: #333;}
.search .task-ico {width: 14px; height: 14px;}
.search input {flex: 1; min-width: 0; font-size: 10px;}
.search input::placeholder {color: #aaa; opacity: 1;}
.ring {width: 16px; height: 16px; border: 2px solid #eee; border-radius: 50%;}
.pinned {display: flex;}
.pinned button {width: 37px;}
.running {display: flex; flex: 1; padding-left: 5px;}
.running button {flex: 1;}
.running .current {background: #34373c;}
.acad {width: 18px; height: 18px; background: linear-gradient(135deg, #f7c9c5, #e0262c 70%);}
.office {position: relative; width: 16px; height: 16px; padding-left: 2px; text-align: left; font-weight: bold; line-height: 16px; color: #fff;}
.office::after {content: ""; position: absolute; top: 3px; right: 0; width: 6px; height: 10px; background: repeating-linear-gradient(#fff 0 2px, #999 2px 3px);}
.excel {background: #1e7145;}
.onenote {background: #80397b;}
.outlook {background: #0072c6;}
.ppt {background: #d24726;}
.word {background: #2b579a;}
.tray {display: flex; align-items: center; justify-content: space-between; width: 159px; padding-left: 4px;}
.tray svg {width: 12px; height: 12px;}
.ime {font-size: 10px; font-weight: bold;}
.sogou {width: 11px; height: 11px; border-radius: 2px; background: #ee4d2b; color: #fff; font-weight: bold; line-height: 11px; text-align: center;}
.clock {width: 70px; line-height: 13px; text-align: center;}
.notify {width: 31px;}
.notify svg {width: 13px; height: 13px;}

/* Overlays */
.ime-bar {position: absolute; right: 0; bottom: 27px; width: 152px; height: 17px; display: flex; align-items: center; justify-content: space-between; padding: 0 3px 0 1px; background: #f7faff; color: #1e78cf;}
.ime-bar svg {width: 12px; height: 12px;}
.ime-bar b {font-size: 11px;}
.ime-bar .sogou {width: 18px; height: 18px; font-size: 16px; line-height: 18px;}
.watermark {position: absolute; right: 54px; bottom: 20px; width: 178px; color: #d9dadc; opacity: 0.8; font-family: "Liberation Sans", "Noto Sans CJK SC", sans-serif;}
.brand {display: flex; align-items: flex-end; height: 56px;}
.latin {font-size: 40px; font-weight: bold; line-height: 36px;}
.paw {position: relative; width: 52px; height: 56px;}
.paw span {position: absolute; left: 11px; bottom: 4px; font-size: 25px; font-weight: bold; line-height: 22px; color: #444;}
.cjk {font-size: 30px; font-weight: bold; line-height: 34px;}
.site {font-family: "Noto Sans", sans-serif; font-size: 21px; line-height: 30px; color: #e8e8e8;}
.float-ball {position: absolute; top: 328px; right: -20px; width: 34px; height: 34px; padding-right: 17px; border: 2px solid #eee; border-radius: 50%; background: #3fc65b; color: #fff; font-weight: bold;}

/* Modify menu */
.modify-menu {position: absolute; top: 0; left: 404px; width: 141px; padding: 0 1px; border: 1px solid #a5a5a5; background: #f0f0f0; color: #111;}
.modify-menu button {position: relative; display: flex; align-items: center; width: 100%; height: 16px; padding-left: 24px;}
.modify-menu .ico {margin: 0 9px 0 -22px;}
.modify-menu .sub::after {content: ""; width: 4px; height: 4px; margin: 0 8px 0 auto; border: 1px solid #555; border-width: 1px 1px 0 0; rotate: 45deg;}
.modify-menu hr {margin: 2px 1px 3px 22px; border: none; border-top: 1px solid #d5d5d5;}
.modify-menu .selected {background: #91c9f7;}
.mark {position: absolute; top: 0; left: -8px; width: 100px; height: 16px;}
```
